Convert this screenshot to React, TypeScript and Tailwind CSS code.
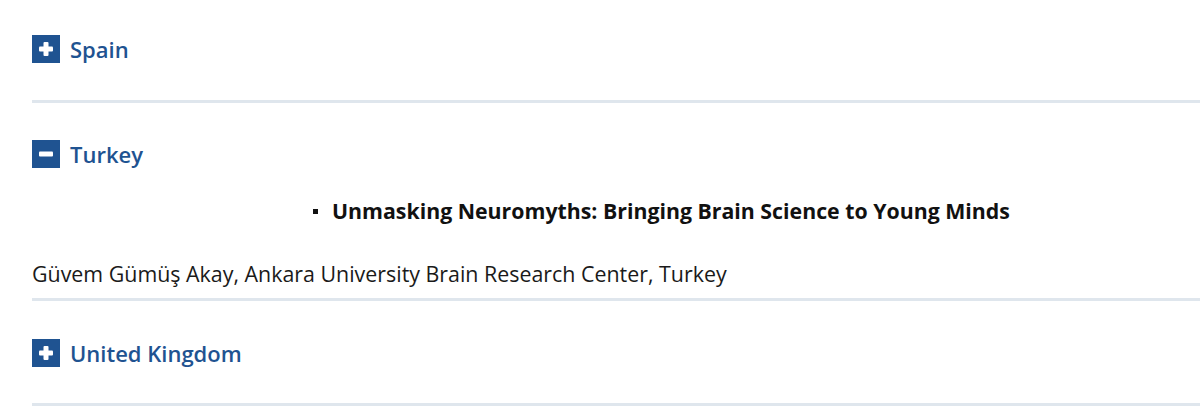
const font = { fontFamily: '"Open Sans", "Liberation Sans", sans-serif' };

function Icon({ open }: { open: boolean }) {
  return (
    <span className="flex h-[28px] w-[28px] shrink-0 items-center justify-center bg-[#1f5391]">
      <svg width="16" height="16" viewBox="0 0 16 16">
        <rect x="1" y="5.5" width="14" height="5" rx="1" fill="#fff" />
        {!open && <rect x="5.5" y="1" width="5" height="14" rx="1" fill="#fff" />}
      </svg>
    </span>
  );
}

function Header({ label, open }: { label: string; open: boolean }) {
  return (
    <div className="flex h-[28px] items-center gap-[10px]">
      <Icon open={open} />
      <span className="text-[22px] font-semibold text-[#1f5391]">{label}</span>
    </div>
  );
}

export default function App() {
  return (
    <div className="min-h-[408px] bg-white pl-[32px] text-[#1a1a1a]" style={font}>
      <section className="border-b-[3px] border-[#dfe6ed] pt-[35px] pb-[37px]">
        <Header label="Spain" open={false} />
      </section>

      <section className="border-b-[3px] border-[#dfe6ed] pt-[37px]">
        <Header label="Turkey" open />
        <div className="mt-[30px] flex items-center pl-[281px]">
          <span className="mr-[14px] h-[5px] w-[5px] bg-[#111]" />
          <span className="text-[21.3px] font-bold leading-[26px] text-[#111]">
            Unmasking Neuromyths: Bringing Brain Science to Young Minds
          </span>
        </div>
        <p className="mt-[37px] pb-[11px] text-[21.4px] leading-[26px]">
          Güvem Gümüş Akay, Ankara University Brain Research Center, Turkey
        </p>
      </section>

      <section className="border-b-[3px] border-[#dfe6ed] pt-[38px] pb-[36px]">
        <Header label="United Kingdom" open={false} />
      </section>
    </div>
  );
}
